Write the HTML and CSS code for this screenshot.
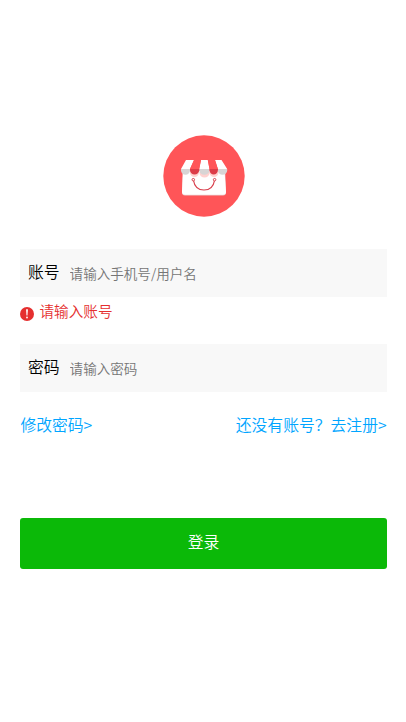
FILE: index.html
```html
<!DOCTYPE html>
<html lang="zh-CN">
<head>
<meta charset="utf-8">
<meta name="viewport" content="width=device-width, initial-scale=1">
<title>登录</title>
<link rel="stylesheet" href="styles.css">
</head>
<body>
<main class="login">
  <svg class="logo" viewBox="0 0 82 82" aria-hidden="true">
    <circle cx="41" cy="41" r="40.7" fill="#ff5558"/>
    <path d="M20 38h42.300l.7 19.500q0 3-3 3H22q-3 0-3-3z" fill="#e8cccc"/>
    <path d="M19.800 36h41.700l1.500 20.700q0 3-3 3H22q-3 0-3-3z" fill="#fff"/>
    <path d="M27 35h9v2.500a4.500 4.500 0 0 1-9 0zM46.500 35h9v2.500a4.500 4.500 0 0 1-9 0zM36.500 37h10v1a5 4.500 0 0 1-10 0z" fill="#ffd2d0"/>
    <path d="M23 25H31L27 34H18zM38 25h6.800l1.700 9H36.200zM52 25H58.500l5.700 9h-9.300z" fill="#fff"/>
    <path d="M31 25h7l-1.800 9H27zM44.800 25H52l2.900 9h-8.400z" fill="#ff5558"/>
    <path d="M18 34h9v1.500a4.500 4.200 0 0 1-9 0zM36.200 34h10.300v1.500a5.150 4.200 0 0 1-10.300 0zM54.900 34h9.300v1.500a4.650 4.200 0 0 1-9.300 0z" fill="#d8d5d5"/>
    <path d="M27 34h9.200v1.300a4.600 4.200 0 0 1-9.200 0zM46.500 34h8.400v1.300a4.200 4.200 0 0 1-8.400 0z" fill="#dc3c48"/>
    <path d="M30.500 45.500c1 6.200 5.200 9.500 10.500 9.500s9.500-3.300 10.500-9.500" fill="none" stroke="#d83f4c" stroke-width="1.200"/>
    <circle cx="30.300" cy="44.700" r="1.250" fill="#fff" stroke="#d83f4c"/>
    <circle cx="51.600" cy="44.700" r="1.250" fill="#fff" stroke="#d83f4c"/>
  </svg>
  <form class="form">
    <label class="field">
      <span class="label">账号</span>
      <input class="input" type="text" placeholder="请输入手机号/用户名">
    </label>
    <p class="error">
      <svg class="error-icon" viewBox="0 0 14 14" aria-hidden="true">
        <circle cx="7" cy="7" r="7" fill="#e52f2f"/>
        <path d="M6.100 2.200h1.800l-.4 6.300h-1z" fill="#fff"/>
        <circle cx="7" cy="10.500" r=".9" fill="#fff"/>
      </svg>
      <span>请输入账号</span>
    </p>
    <label class="field">
      <span class="label">密码</span>
      <input class="input" type="password" placeholder="请输入密码">
    </label>
    <nav class="links">
      <a class="link" href="#">修改密码&gt;</a>
      <a class="link" href="#">还没有账号？去注册&gt;</a>
    </nav>
    <button class="submit" type="button">登录</button>
  </form>
</main>
</body>
</html>
```
FILE: styles.css
```css
* {
  box-sizing: border-box;
}

body {
  margin: 0;
  background: #fff;
  font-family: "Noto Sans CJK SC", sans-serif;
  font-size: 15.8px;
  font-weight: 350;
  color: #000;
}

.login {
  display: flex;
  flex-direction: column;
  padding: 135px 19px 0 20px;
}

.logo {
  width: 82px;
  height: 82px;
  margin-left: 143px;
}

.form {
  margin-top: 32px;
}

.field {
  display: flex;
  align-items: center;
  height: 48px;
  padding: 0 8px;
  background: #f8f8f8;
}

.label {
  padding-bottom: 2px;
  line-height: 24px;
}

.input {
  flex: 1;
  min-width: 0;
  margin-left: 10px;
  padding: 0 0 1px;
  border: 0;
  outline: 0;
  background: none;
  font: inherit;
  font-size: 13.55px;
}

.input::placeholder {
  color: #757575;
}

.error {
  display: flex;
  align-items: center;
  gap: 5.5px;
  height: 29px;
  margin: 0 0 18px;
  font-size: 14.6px;
  line-height: 27px;
  color: #e52f2f;
}

.error span {
  padding-bottom: 2px;
}

.error-icon {
  width: 14px;
  height: 14px;
  margin-top: 4px;
}

.links {
  display: flex;
  justify-content: space-between;
  margin-top: 21px;
  padding-left: .4px;
  padding-right: .4px;
  line-height: 24px;
}

.link {
  color: #00a5ff;
  text-decoration: none;
}

.submit {
  display: block;
  width: 100%;
  height: 50.6px;
  margin-top: 81px;
  padding: 0 0 3px;
  border: 0;
  border-radius: 3px;
  background: #0bb908;
  font: inherit;
  color: #fff;
}
```
